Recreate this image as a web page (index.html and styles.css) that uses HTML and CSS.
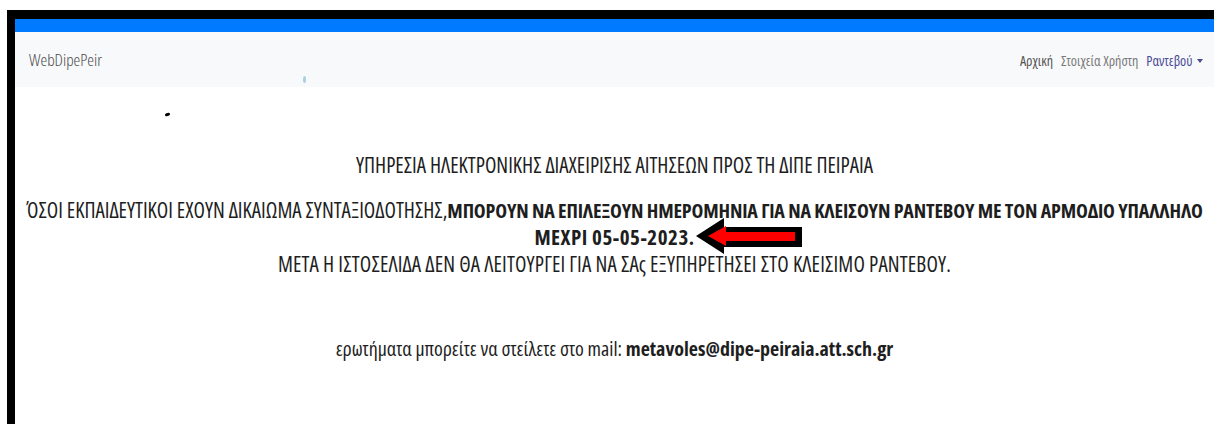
FILE: index.html
```html
<!DOCTYPE html>
<html lang="el">
<head>
<meta charset="utf-8">
<title>WebDipePeir</title>
<link rel="stylesheet" href="styles.css">
</head>
<body>
<div class="frame">
  <div class="topbar"></div>
  <nav class="navbar">
    <a class="brand" href="#">WebDipePeir</a>
    <span class="speck speck-blue"></span>
    <ul class="nav-links">
      <li><a class="nav-link home" href="#">Αρχική</a></li>
      <li><a class="nav-link" href="#">Στοιχεία Χρήστη</a></li>
      <li><a class="nav-link dropdown" href="#">Ραντεβού <span class="caret"></span></a></li>
    </ul>
  </nav>
  <main class="content">
    <span class="speck speck-dark"></span>
    <p class="title">ΥΠΗΡΕΣΙΑ ΗΛΕΚΤΡΟΝΙΚΗΣ ΔΙΑΧΕΙΡΙΣΗΣ ΑΙΤΗΣΕΩΝ ΠΡΟΣ ΤΗ ΔΙΠΕ ΠΕΙΡΑΙΑ</p>
    <p class="notice">
      <span class="nowrap">ΌΣΟΙ ΕΚΠΑΙΔΕΥΤΙΚΟΙ ΕΧΟΥΝ ΔΙΚΑΙΩΜΑ ΣΥΝΤΑΞΙΟΔΟΤΗΣΗΣ,<strong class="lead">ΜΠΟΡΟΥΝ ΝΑ ΕΠΙΛΕΞΟΥΝ ΗΜΕΡΟΜΗΝΙΑ ΓΙΑ ΝΑ ΚΛΕΙΣΟΥΝ ΡΑΝΤΕΒΟΥ ΜΕ ΤΟΝ ΑΡΜΟΔΙΟ ΥΠΑΛΛΗΛΟ</strong></span><br>
      <span class="deadline"><strong class="date">ΜΕΧΡΙ 05-05-2023.</strong>
        <svg class="arrow" width="106" height="36" viewBox="0 0 106 36" aria-hidden="true">
          <polygon points="0,18 28,0 28,9 106,9 106,29 28,29 28,36" fill="#000"/>
          <polygon points="12,18 30,8 30,14 99,14 99,23 30,23 30,28" fill="#f00"/>
        </svg>
      </span>
      <span class="after">ΜΕΤΑ Η ΙΣΤΟΣΕΛΙΔΑ ΔΕΝ ΘΑ ΛΕΙΤΟΥΡΓΕΙ ΓΙΑ ΝΑ ΣΑς ΕΞΥΠΗΡΕΤΗΣΕΙ ΣΤΟ ΚΛΕΙΣΙΜΟ ΡΑΝΤΕΒΟΥ.</span>
    </p>
    <p class="contact">ερωτήματα μπορείτε να στείλετε στο mail: <strong>metavoles@dipe-peiraia.att.sch.gr</strong></p>
  </main>
</div>
</body>
</html>
```

FILE: styles.css
```css
html, body {
  margin: 0;
  padding: 0;
  background: #fff;
  overflow: hidden;
}

body {
  font-family: "Open Sans", "DejaVu Sans", sans-serif;
  font-stretch: 75%;
  color: #1e1e1e;
}

.frame {
  box-sizing: border-box;
  margin: 10px 0 0 7px;
  border-top: 9px solid #000;
  border-left: 8px solid #000;
  height: calc(100vh - 10px);
  position: relative;
}

.topbar {
  height: 13px;
  background: #007bff;
}

.navbar {
  height: 55px;
  background: #f8f9fa;
  display: flex;
  align-items: center;
  justify-content: space-between;
  padding: 0 11px 0 14px;
  position: relative;
}

.brand {
  font-size: 17px;
  font-weight: 300;
  color: #4a4a4a;
  text-decoration: none;
}

.nav-links {
  list-style: none;
  display: flex;
  gap: 8px;
  margin: 0;
  padding: 0;
}

.nav-link {
  font-size: 14px;
  color: #7a7a7a;
  text-decoration: none;
}

.nav-link.home {
  color: #555;
}

.nav-link.dropdown {
  color: #4a4a96;
}

.caret {
  display: inline-block;
  margin-left: 2px;
  vertical-align: 3px;
  border-top: 4px solid #4a4a96;
  border-left: 3px solid transparent;
  border-right: 3px solid transparent;
}

.content {
  text-align: center;
  padding-top: 66px;
  position: relative;
}

.content p {
  margin: 0;
}

.title {
  font-size: 21px;
  line-height: 24px;
}

.notice {
  margin-top: 20px !important;
  font-size: 21px;
  line-height: 26px;
}

.nowrap {
  white-space: nowrap;
}

.lead {
  font-size: 20px;
  letter-spacing: -0.15px;
}

.deadline {
  position: relative;
}

.date {
  letter-spacing: 0.5px;
}

.arrow {
  position: absolute;
  left: calc(100% + 1px);
  top: -5px;
}

.after {
  display: block;
  margin-top: 1px;
  letter-spacing: 0.15px;
}

.contact {
  margin-top: 60px !important;
  font-size: 20px;
  line-height: 24px;
}

strong {
  font-weight: 700;
}

.speck {
  position: absolute;
  display: block;
}

.speck-blue {
  left: 288px;
  top: 44px;
  width: 3px;
  height: 7px;
  border-radius: 50%;
  background: #a9cfe3;
}

.speck-dark {
  left: 150px;
  top: 26px;
  width: 5px;
  height: 3px;
  border-radius: 40%;
  background: #000;
  transform: rotate(-20deg);
}
```
